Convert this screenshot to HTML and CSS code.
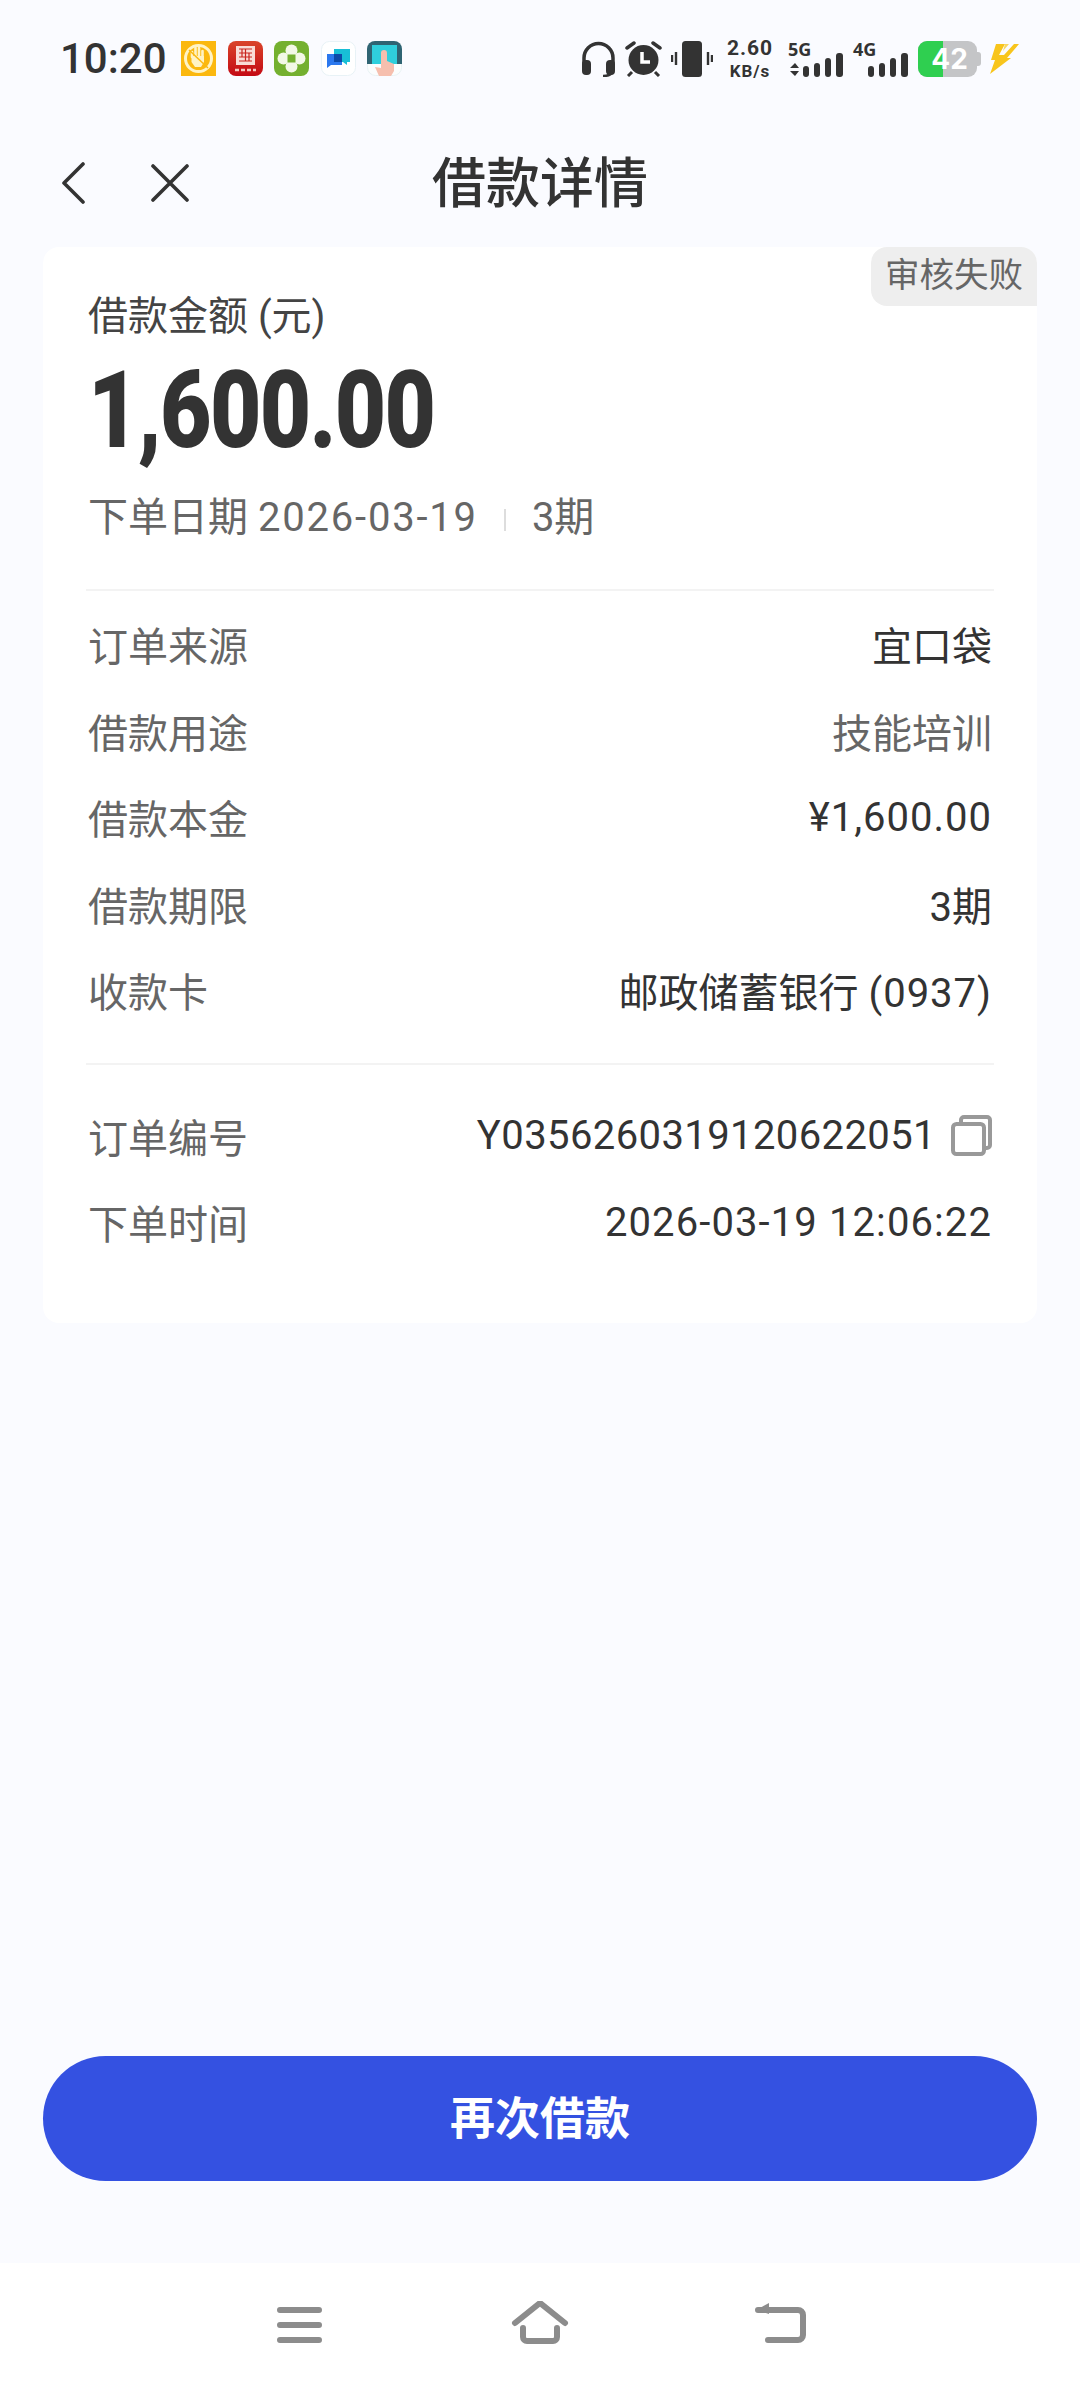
FILE: index.html
```html
<!DOCTYPE html>
<html lang="zh">
<head>
    <meta charset="UTF-8">
    <meta name="viewport" content="width=device-width, initial-scale=1.0">
    <title>借款详情</title>
    <link rel="stylesheet" href="styles.css">
</head>
<body>
    <div class="page">
        <!-- Status bar -->
        <div class="status-bar">
            <div class="status-left">
                <span class="time">10:20</span>
                <svg class="app-icon" viewBox="0 0 35 35">
                    <rect width="35" height="35" fill="#fbb80f"/>
                    <circle cx="17.500" cy="17.500" r="13" fill="none" stroke="#fff3c4" stroke-width="3"/>
                    <path d="M11 16v-5M14.500 15v-8M18 15v-8M21.500 16v-6" stroke="#fff3c4" stroke-width="2.600" stroke-linecap="round"/>
                    <path d="M10.500 15h12.500v6l-3 5h-6l-3.500-5z" fill="#fff3c4"/>
                    <path d="M8 9l19 18" stroke="#fbb80f" stroke-width="1.500"/>
                </svg>
                <svg class="app-icon" viewBox="0 0 35 35">
                    <defs>
                        <linearGradient id="red-grad" x1="0" y1="0" x2="0" y2="1">
                            <stop offset="0" stop-color="#d9442a"/>
                            <stop offset="1" stop-color="#c40a14"/>
                        </linearGradient>
                    </defs>
                    <rect width="35" height="35" rx="8" fill="url(#red-grad)"/>
                    <path d="M8 5h19v19h-19z" fill="#f9dcd6"/>
                    <path d="M11 8h13M11 12h13M11 16h13M11 20h13M14 8v8M21 12v8M17.500 8v12" stroke="#c9261f" stroke-width="1.200" fill="none"/>
                    <path d="M7 29h4M13 29h4M19 29h4M25 29h3" stroke="#f5c8c0" stroke-width="2.400"/>
                </svg>
                <svg class="app-icon" viewBox="0 0 35 35">
                    <rect width="35" height="35" rx="8" fill="#74b02f"/>
                    <circle cx="17.500" cy="9.500" r="6" fill="#f3f8e6"/>
                    <circle cx="17.500" cy="25.500" r="6" fill="#f3f8e6"/>
                    <circle cx="9.500" cy="17.500" r="6" fill="#f3f8e6"/>
                    <circle cx="25.500" cy="17.500" r="6" fill="#f3f8e6"/>
                    <rect x="13.500" y="13.500" width="8" height="8" fill="#74b02f"/>
                </svg>
                <svg class="app-icon" viewBox="0 0 35 35">
                    <rect x="0.500" y="0.500" width="34" height="34" rx="8" fill="#fff" stroke="#e8f2f6"/>
                    <path d="M13 8h16v13h-3v3l-4-3h-9z" fill="#18bfd6"/>
                    <path d="M6 13h15v11h-11l-4 3z" fill="#2b78ee"/>
                    <path d="M13 13h8v8h-8z" fill="#0c4aa8"/>
                </svg>
                <svg class="app-icon" viewBox="0 0 35 35">
                    <rect x="0.500" y="0.500" width="34" height="34" rx="8" fill="#fbfdfd" stroke="#e8f2f4"/>
                    <path d="M0 8a8 8 0 0 1 8-8h19a8 8 0 0 1 8 8v15h-35z" fill="#2f6473"/>
                    <rect x="5" y="4" width="25" height="19" fill="#2fcfdc"/>
                    <path d="M14 12a3 3 0 0 1 6 0v8l7 3v7l-3 5h-12l-4-9 6 1z" fill="#f6bfae"/>
                </svg>
            </div>
            <div class="status-right">
                <svg class="st-headphones" width="35" height="36" viewBox="0 0 35 36">
                    <path d="M3 23v-6a14.500 14.500 0 0 1 29 0v6" fill="none" stroke="#333" stroke-width="3.500"/>
                    <rect x="1" y="19" width="9" height="15" rx="4" fill="#333"/>
                    <rect x="25" y="19" width="9" height="15" rx="4" fill="#333"/>
                    <path d="M31 31c-1 3-4 4-9 4" fill="none" stroke="#333" stroke-width="2.500"/>
                </svg>
                <svg class="st-alarm" width="37" height="36" viewBox="0 0 37 36">
                    <circle cx="18.500" cy="19" r="15" fill="#333"/>
                    <path d="M2 7l7-5M35 7l-7-5" stroke="#333" stroke-width="3.500" stroke-linecap="round"/>
                    <path d="M7 31l-4 4M30 31l4 4" stroke="#333" stroke-width="3"/>
                    <path d="M17 11v10h8" fill="none" stroke="#fff" stroke-width="3.500"/>
                </svg>
                <svg class="st-vibrate" width="42" height="36" viewBox="0 0 42 36">
                    <rect x="11" y="0" width="20" height="36" rx="3.500" fill="#333"/>
                    <path d="M5 11v13M1 14v7M37 11v13M41 14v7" stroke="#333" stroke-width="2.400"/>
                </svg>
                <div class="st-speed">
                    <span class="speed-num">2.60</span>
                    <span class="speed-unit">KB/s</span>
                </div>
                <div class="st-net st-net-first">
                    <span class="net-label">5G</span>
                    <svg width="55" height="36" viewBox="0 0 55 36">
                        <path d="M7 22l4 5h-9zM7 35l4-5h-9z" fill="#333"/>
                        <rect x="15" y="25" width="6" height="11" rx="3" fill="#333"/>
                        <rect x="26" y="22" width="6" height="14" rx="3" fill="#333"/>
                        <rect x="37" y="17" width="6" height="19" rx="3" fill="#333"/>
                        <rect x="48" y="12" width="7" height="24" rx="3" fill="#333"/>
                    </svg>
                </div>
                <div class="st-net">
                    <span class="net-label">4G</span>
                    <svg width="55" height="36" viewBox="0 0 55 36">
                        <rect x="15" y="25" width="6" height="11" rx="3" fill="#333"/>
                        <rect x="26" y="22" width="6" height="14" rx="3" fill="#333"/>
                        <rect x="37" y="17" width="6" height="19" rx="3" fill="#333"/>
                        <rect x="48" y="12" width="7" height="24" rx="3" fill="#333"/>
                    </svg>
                </div>
                <div class="battery">
                    <div class="battery-body">
                        <div class="battery-fill"></div>
                        <span class="battery-num">42</span>
                    </div>
                    <div class="battery-nub"></div>
                </div>
                <svg class="st-bolt" width="29" height="30" viewBox="0 0 29 30">
                    <path d="M6 0h9l-6 11h5l10-11h5l-12 14h4l-21 16 5-14h-4z" fill="#f8c51c"/>
                    <path d="M15 0h4l-6 7z" fill="#f8d862"/>
                </svg>
            </div>
        </div>

        <!-- Nav bar -->
        <div class="nav-bar">
            <div class="nav-buttons">
                <svg class="nav-back" width="24" height="42" viewBox="0 0 24 42">
                    <path d="M22 2l-19 19 19 19" fill="none" stroke="#333" stroke-width="3.600" stroke-linecap="round" stroke-linejoin="round"/>
                </svg>
                <svg class="nav-close" width="38" height="38" viewBox="0 0 38 38">
                    <path d="M2 2l34 34M36 2l-34 34" fill="none" stroke="#333" stroke-width="3.600" stroke-linecap="round"/>
                </svg>
            </div>
            <h1 class="nav-title">借款详情</h1>
        </div>

        <!-- Loan card -->
        <div class="card">
            <div class="badge">审核失败</div>
            <div class="card-head">
                <div class="amount-label">借款金额 (元)</div>
                <div class="amount">1,600.00</div>
                <div class="order-meta">
                    <span>下单日期 <span class="date-wide">2026-03-19</span></span>
                    <span class="meta-sep"></span>
                    <span>3期</span>
                </div>
            </div>
            <div class="section">
                <div class="row"><span class="row-label">订单来源</span><span class="row-value">宜口袋</span></div>
                <div class="row"><span class="row-label">借款用途</span><span class="row-value muted">技能培训</span></div>
                <div class="row"><span class="row-label">借款本金</span><span class="row-value spaced">¥1,600.00</span></div>
                <div class="row"><span class="row-label">借款期限</span><span class="row-value">3期</span></div>
                <div class="row"><span class="row-label">收款卡</span><span class="row-value">邮政储蓄银行 <span class="spaced">(0937)</span></span></div>
            </div>
            <div class="section section-last">
                <div class="row">
                    <span class="row-label">订单编号</span>
                    <span class="row-value with-icon">
                        <span class="order-no">Y0356260319120622051</span>
                        <svg class="copy-icon" width="41" height="41" viewBox="0 0 41 41">
                            <path d="M10 7v-2a3 3 0 0 1 3-3h23a3 3 0 0 1 3 3v25a3 3 0 0 1-3 3h-3" fill="none" stroke="#999" stroke-width="4"/>
                            <rect x="2" y="9" width="31" height="30" rx="3.500" fill="none" stroke="#999" stroke-width="4"/>
                        </svg>
                    </span>
                </div>
                <div class="row"><span class="row-label">下单时间</span><span class="row-value date-time">2026-03-19 12:06:22</span></div>
            </div>
        </div>

        <div class="spacer"></div>

        <button class="primary-btn">再次借款</button>

        <!-- System navigation -->
        <div class="system-nav">
            <svg width="60" height="44" viewBox="0 0 60 44">
                <path d="M10 9h39M10 24h39M10 39h39" stroke="#8c8c8c" stroke-width="6" stroke-linecap="round"/>
            </svg>
            <svg width="60" height="44" viewBox="0 0 60 44">
                <path d="M5 22l25-20 25 20" fill="none" stroke="#8c8c8c" stroke-width="6" stroke-linecap="round" stroke-linejoin="round"/>
                <path d="M13 27v9a4 4 0 0 0 4 4h26a4 4 0 0 0 4-4v-9" fill="none" stroke="#8c8c8c" stroke-width="6" stroke-linecap="round"/>
            </svg>
            <svg width="60" height="44" viewBox="0 0 60 44">
                <path d="M8 9h40a5 5 0 0 1 5 5v20a5 5 0 0 1-5 5h-30" fill="none" stroke="#8c8c8c" stroke-width="6" stroke-linecap="round"/>
                <path d="M6 9l13-7v11z" fill="#8c8c8c"/>
            </svg>
        </div>
    </div>
</body>
</html>
```

FILE: styles.css
```css
* {
    box-sizing: border-box;
}
body {
    margin: 0;
    background-color: #fafbff;
    color: #333;
    font-family: Roboto, "Noto Sans CJK SC", sans-serif;
}
.page {
    display: flex;
    flex-direction: column;
    width: 1080px;
    height: 2388px;
}

/* Status bar */
.status-bar {
    display: flex;
    justify-content: space-between;
    height: 118px;
    padding: 41px 61px 0 60px;
}
.status-left,
.status-right {
    display: flex;
    align-items: flex-start;
}
.time {
    width: 121px;
    font-size: 42px;
    font-weight: 500;
    line-height: 36px;
}
.app-icon {
    width: 35px;
    height: 35px;
    margin-right: 11.5px;
}
.st-alarm,
.st-vibrate,
.st-bolt {
    margin-left: 9px;
}
.st-bolt {
    margin-top: 3px;
}
.st-speed {
    display: flex;
    flex-direction: column;
    align-items: center;
    width: 46px;
    margin-top: -5px;
    margin-left: 14px;
    font-weight: 700;
}
.speed-num {
    font-size: 21px;
    line-height: 25px;
    letter-spacing: 1px;
}
.speed-unit {
    font-size: 17px;
    line-height: 20px;
    letter-spacing: 1px;
}
.st-net {
    position: relative;
    width: 55px;
    height: 36px;
    margin-left: 10px;
}
.st-net-first {
    margin-left: 15px;
}
.net-label {
    position: absolute;
    top: -4px;
    left: 0;
    font-family: "Open Sans", sans-serif;
    font-size: 18px;
    font-weight: 700;
    line-height: 24px;
}
.battery {
    display: flex;
    align-items: center;
    margin-left: 10px;
}
.battery-body {
    position: relative;
    display: flex;
    justify-content: center;
    align-items: center;
    overflow: hidden;
    width: 59px;
    height: 36px;
    border-radius: 9px;
    background-color: #c4c5c7;
}
.battery-fill {
    position: absolute;
    top: 0;
    left: 0;
    bottom: 0;
    width: 25px;
    background-color: #2fcf50;
}
.battery-num {
    position: relative;
    font-family: Inter, sans-serif;
    font-size: 28px;
    font-weight: 700;
    line-height: 36px;
    color: #fff;
    margin-left: 4px;
}
.battery-nub {
    width: 4px;
    height: 14px;
    border-radius: 0 3px 3px 0;
    background-color: #c4c5c7;
}

/* Nav bar */
.nav-bar {
    position: relative;
    display: flex;
    justify-content: center;
    align-items: center;
    height: 129px;
}
.nav-buttons {
    position: absolute;
    left: 61px;
    top: 0;
    bottom: 0;
    display: flex;
    align-items: center;
    gap: 66px;
}
.nav-title {
    margin: 0 0 6px;
    font-family: "Noto Sans CJK SC", sans-serif;
    font-size: 54px;
    font-weight: 500;
}

/* Card */
.card {
    position: relative;
    margin: 0 43px;
    border-radius: 16px;
    background-color: #fff;
}
.badge {
    position: absolute;
    top: 0;
    right: 0;
    width: 166px;
    height: 59px;
    border-radius: 16px 16px 0 16px;
    background-color: #eeeeee;
    color: #666;
    font-size: 34.5px;
    line-height: 57px;
    text-align: center;
}
.card-head {
    margin: 0 43px;
    padding: 42px 2px 43px;
}
.amount-label {
    font-size: 40px;
    line-height: 56px;
    color: #444;
}
.amount {
    margin-top: 11px;
    font-size: 107px;
    font-weight: 900;
    line-height: 110px;
    letter-spacing: -2px;
    transform: scaleX(0.83);
    transform-origin: left center;
}
.order-meta {
    display: flex;
    align-items: center;
    margin-top: 24px;
    font-size: 40px;
    line-height: 56px;
    color: #666;
}
.date-wide {
    letter-spacing: 1.8px;
}
.meta-sep {
    width: 2px;
    height: 22px;
    margin: 4px 26px 0 26px;
    background-color: #ddd;
}
.section {
    margin: 0 43px;
    padding: 10px 2px 29px;
    border-top: 2px solid #f3f3f3;
}
.section-last {
    padding: 28px 2px 57px;
}
.row {
    display: flex;
    justify-content: space-between;
    align-items: center;
    height: 86.5px;
    font-size: 40px;
}
.row-label {
    color: #666;
}
.row-value.muted {
    color: #666;
}
.spaced {
    letter-spacing: 1px;
}
.order-no {
    letter-spacing: 0.4px;
}
.date-time {
    letter-spacing: 1.1px;
}
.with-icon {
    display: flex;
    align-items: center;
    gap: 15px;
}
.spacer {
    flex: 1;
}

/* Bottom */
.primary-btn {
    display: block;
    margin: 0 43px 82px;
    height: 125px;
    padding: 0 0 6px;
    border: none;
    border-radius: 63px;
    background-color: #3451e1;
    color: #fff;
    font-family: "Noto Sans CJK SC", sans-serif;
    font-size: 45px;
    font-weight: 700;
}
.system-nav {
    display: grid;
    grid-template-columns: 240px 240px 240px;
    justify-content: center;
    justify-items: center;
    height: 125px;
    padding-top: 38px;
    background-color: #fff;
}
```
